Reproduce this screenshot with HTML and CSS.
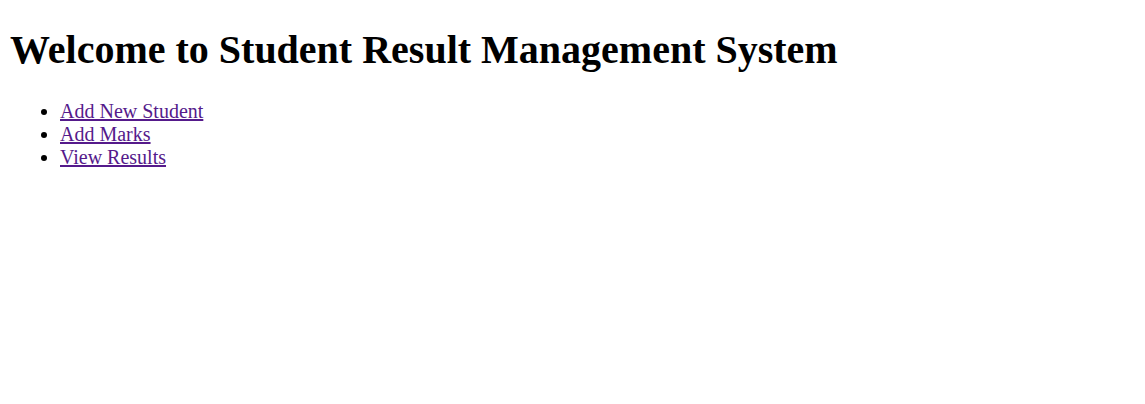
FILE: index.html
```html
<!DOCTYPE html>
<html>
<head>
<meta charset="utf-8">
<title>Student Result Management System</title>
<link rel="stylesheet" href="styles.css">
</head>
<body class="page">
<h1 class="title">Welcome to Student Result Management System</h1>
<ul class="menu">
<li><a class="menu-link" href="#add-student">Add New Student</a></li>
<li><a class="menu-link" href="#add-marks">Add Marks</a></li>
<li><a class="menu-link" href="#view-results">View Results</a></li>
</ul>
</body>
</html>
```
FILE: styles.css
```css
.page {
  margin: 10px;
  font-family: "Liberation Serif", "Times New Roman", serif;
  font-size: 20px;
  color: #000;
  background: #fff;
}
.title {
  font-size: 40px;
  font-weight: bold;
  margin: 16px 0 26.8px;
}
.menu {
  margin: 20px 0;
  padding-left: 50px;
}
.menu-link {
  color: #551a8b;
  text-decoration: underline;
}
```
